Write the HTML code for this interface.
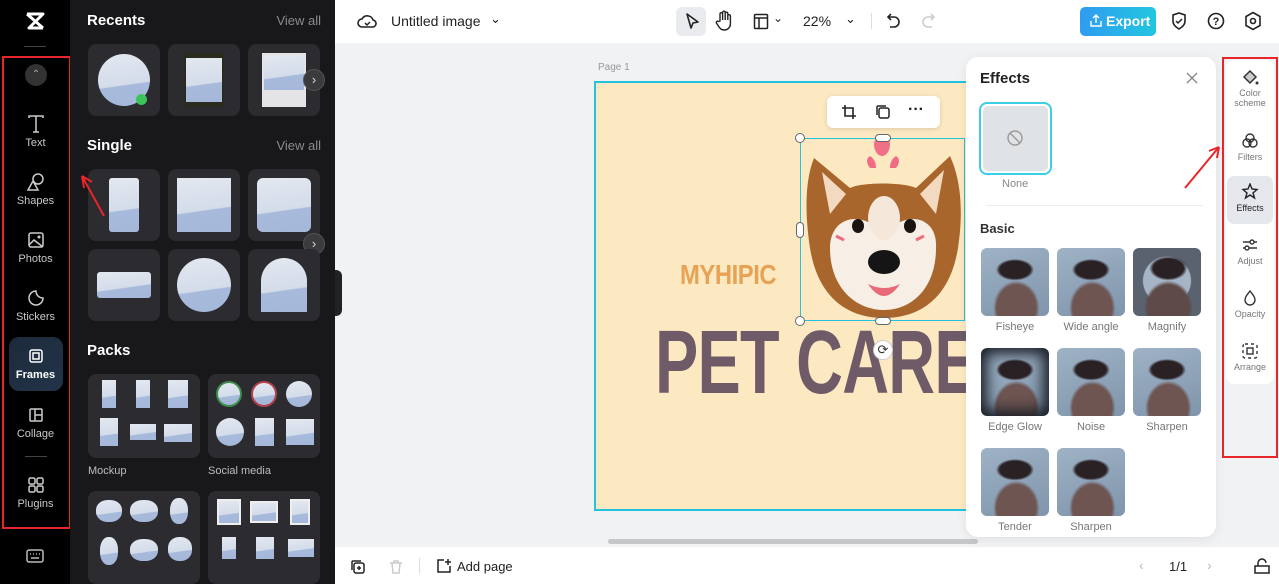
<!DOCTYPE html>
<html><head><meta charset="utf-8"><style>
*{box-sizing:border-box;margin:0;padding:0}
body{width:1279px;height:584px;overflow:hidden;font-family:"Liberation Sans",sans-serif;background:#f1f2f4;position:relative}
.abs{position:absolute}
#rail{left:0;top:0;width:70px;height:584px;background:#000}
#panel{left:70px;top:0;width:265px;height:584px;background:#18181b}
.ri{position:absolute;left:8px;width:55px;text-align:center;color:#c9c9cc;font-size:11px}
.ri svg{display:block;margin:0 auto 3px}
.h{position:absolute;color:#fff;font-weight:bold;font-size:15px}
.va{position:absolute;color:#8a8a8f;font-size:13px;right:14px}
.tile{position:absolute;width:72px;height:72px;background:#2b2b30;border-radius:8px;overflow:hidden}
.sky{position:absolute;background:linear-gradient(172deg,#e3e8f0 0%,#d4dcea 58%,#a7badb 60%,#a5b8da 100%)}
.pk{position:absolute;width:112px;height:84px;background:#2b2b30;border-radius:8px}
.pl{position:absolute;color:#bdbdc2;font-size:11px}
.nx{position:absolute;width:22px;height:22px;border-radius:50%;background:#3a3a3f;border:1px solid #555;color:#ddd;font-size:13px;text-align:center;line-height:19px}
#top{left:335px;top:0;width:944px;height:43px;background:#fff}
#bot{left:335px;top:547px;width:944px;height:37px;background:#fff}
#eff{left:966px;top:57px;width:250px;height:480px;background:#fff;border-radius:12px;box-shadow:0 2px 10px rgba(0,0,0,.08)}
.et{position:absolute;width:68px;height:68px;border-radius:6px;background:radial-gradient(ellipse 28% 16% at 50% 32%,#2a2124 80%,transparent 100%),radial-gradient(ellipse 34% 40% at 52% 88%,#6e5552 85%,transparent 100%),linear-gradient(160deg,#9fb2c6,#7f95ab)}
.el{position:absolute;width:68px;text-align:center;font-size:11px;color:#777}
#rr{left:1226px;top:60px;width:48px;height:324px;background:#fff;border-radius:8px}
.rt{position:absolute;left:2px;width:44px;text-align:center;font-size:9px;color:#777;line-height:10px}
.rt svg{display:block;margin:0 auto 2px}
.red{position:absolute;border:2px solid #e8262a}
</style></head><body>

<div id="rail" class="abs">
 <svg class="abs" style="left:24px;top:10px" width="22" height="22" viewBox="0 0 22 22"><path d="M3 4h16L5 18h14M3 4l16 14" stroke="#fff" stroke-width="3" fill="none" stroke-linejoin="round"/></svg>
 <div class="abs" style="left:24px;top:46px;width:22px;height:1px;background:#444"></div>
 <div class="abs" style="left:25px;top:64px;width:22px;height:22px;border-radius:50%;background:#333;color:#aaa;font-size:10px;text-align:center;line-height:22px">⌃</div>
 <div class="ri" style="top:114px"><svg width="20" height="20" viewBox="0 0 20 20"><path d="M3 4V2h14v2M10 2v16M7 18h6" stroke="#ccc" stroke-width="1.5" fill="none"/></svg>Text</div>
 <div class="ri" style="top:172px"><svg width="20" height="20" viewBox="0 0 20 20"><circle cx="12" cy="7" r="5" stroke="#ccc" stroke-width="1.5" fill="none"/><path d="M7 9l-5 9h10z" stroke="#ccc" stroke-width="1.5" fill="#000"/></svg>Shapes</div>
 <div class="ri" style="top:230px"><svg width="20" height="20" viewBox="0 0 20 20"><rect x="3" y="3" width="14" height="14" rx="2" stroke="#ccc" stroke-width="1.5" fill="none"/><path d="M3 15l5-5 9 7" stroke="#ccc" stroke-width="1.5" fill="none"/><circle cx="13" cy="7" r="1.5" fill="#ccc"/></svg>Photos</div>
 <div class="ri" style="top:288px"><svg width="20" height="20" viewBox="0 0 20 20"><path d="M10 3a7 7 0 1 0 7 7c-4 0-7-3-7-7z" stroke="#ccc" stroke-width="1.5" fill="none"/></svg>Stickers</div>
 <div class="abs" style="left:9px;top:337px;width:54px;height:54px;border-radius:10px;background:linear-gradient(135deg,#1c2a3a,#23344a)"></div>
 <div class="ri" style="top:346px;color:#fff;font-weight:bold"><svg width="20" height="20" viewBox="0 0 20 20"><rect x="4" y="4" width="12" height="12" rx="2" stroke="#fff" stroke-width="1.5" fill="none"/><rect x="7" y="7" width="6" height="6" stroke="#fff" stroke-width="1.5" fill="none"/></svg>Frames</div>
 <div class="ri" style="top:405px"><svg width="20" height="20" viewBox="0 0 20 20"><rect x="4" y="4" width="12" height="12" rx="1" stroke="#ccc" stroke-width="1.5" fill="none"/><path d="M9 4v12M9 10h7" stroke="#ccc" stroke-width="1.5"/></svg>Collage</div>
 <div class="abs" style="left:25px;top:456px;width:22px;height:1px;background:#444"></div>
 <div class="ri" style="top:475px"><svg width="20" height="20" viewBox="0 0 20 20"><rect x="3" y="3" width="6" height="6" rx="1.5" stroke="#ccc" stroke-width="1.5" fill="none"/><rect x="11" y="3" width="6" height="6" rx="1.5" stroke="#ccc" stroke-width="1.5" fill="none"/><rect x="3" y="11" width="6" height="6" rx="1.5" stroke="#ccc" stroke-width="1.5" fill="none"/><rect x="11" y="11" width="6" height="6" rx="1.5" stroke="#ccc" stroke-width="1.5" fill="none"/></svg>Plugins</div>
 <svg class="abs" style="left:26px;top:548px" width="18" height="16" viewBox="0 0 18 16"><rect x="1" y="2" width="16" height="12" rx="2" stroke="#bbb" stroke-width="1.5" fill="none"/><path d="M4 6h1M7 6h1M10 6h1M13 6h1M5 10h8" stroke="#bbb" stroke-width="1.5"/></svg>
</div>
<div class="red" style="left:2px;top:56px;width:69px;height:473px"></div>

<div id="panel" class="abs">
 <div class="h" style="left:17px;top:12px">Recents</div><div class="va" style="top:13px">View all</div>
 <div class="tile" style="left:18px;top:44px"><div class="sky" style="left:10px;top:10px;width:52px;height:52px;border-radius:50%"></div><div class="abs" style="left:48px;top:50px;width:11px;height:11px;border-radius:50%;background:#3ac45a"></div></div>
 <div class="tile" style="left:98px;top:44px"><div class="abs" style="left:16px;top:9px;width:40px;height:54px;background:#2a2a1f"></div><div class="sky" style="left:18px;top:14px;width:36px;height:44px"></div></div>
 <div class="tile" style="left:178px;top:44px"><div class="abs" style="left:14px;top:9px;width:44px;height:54px;background:#e4e4e6"></div><div class="sky" style="left:16px;top:12px;width:40px;height:34px"></div></div>
 <div class="nx" style="left:233px;top:69px">›</div>

 <div class="h" style="left:17px;top:137px">Single</div><div class="va" style="top:138px">View all</div>
 <div class="tile" style="left:18px;top:169px"><div class="sky" style="left:21px;top:9px;width:30px;height:54px;border-radius:3px"></div></div>
 <div class="tile" style="left:98px;top:169px"><div class="sky" style="left:9px;top:9px;width:54px;height:54px"></div></div>
 <div class="tile" style="left:178px;top:169px"><div class="sky" style="left:9px;top:9px;width:54px;height:54px;border-radius:6px"></div></div>
 <div class="nx" style="left:233px;top:233px">›</div>
 <div class="tile" style="left:18px;top:249px"><div class="sky" style="left:9px;top:23px;width:54px;height:26px;border-radius:3px"></div></div>
 <div class="tile" style="left:98px;top:249px"><div class="sky" style="left:9px;top:9px;width:54px;height:54px;border-radius:50%"></div></div>
 <div class="tile" style="left:178px;top:249px"><div class="sky" style="left:13px;top:9px;width:46px;height:54px;border-radius:23px 23px 0 0"></div></div>

 <div class="h" style="left:17px;top:342px">Packs</div>
 <div class="pk" style="left:18px;top:374px">
  <div class="sky" style="left:14px;top:6px;width:14px;height:28px"></div><div class="sky" style="left:48px;top:6px;width:14px;height:28px"></div><div class="sky" style="left:80px;top:6px;width:20px;height:28px"></div>
  <div class="sky" style="left:12px;top:44px;width:18px;height:28px"></div><div class="sky" style="left:42px;top:50px;width:26px;height:16px"></div><div class="sky" style="left:76px;top:50px;width:28px;height:18px"></div>
 </div>
 <div class="pk" style="left:138px;top:374px">
  <div class="sky" style="left:8px;top:7px;width:26px;height:26px;border-radius:50%;border:2px solid #3c8c4a"></div><div class="sky" style="left:43px;top:7px;width:26px;height:26px;border-radius:50%;border:2px solid #b3404f"></div><div class="sky" style="left:78px;top:7px;width:26px;height:26px;border-radius:50%"></div>
  <div class="sky" style="left:8px;top:44px;width:28px;height:28px;border-radius:50%"></div><div class="sky" style="left:47px;top:44px;width:19px;height:28px"></div><div class="sky" style="left:78px;top:45px;width:28px;height:26px"></div>
 </div>
 <div class="pl" style="left:18px;top:465px">Mockup</div><div class="pl" style="left:138px;top:465px">Social media</div>
 <div class="pk" style="left:18px;top:491px;height:93px">
  <div class="sky" style="left:8px;top:9px;width:26px;height:22px;border-radius:45%"></div><div class="sky" style="left:42px;top:9px;width:28px;height:22px;border-radius:45%"></div><div class="sky" style="left:82px;top:7px;width:18px;height:26px;border-radius:45%"></div>
  <div class="sky" style="left:12px;top:46px;width:18px;height:28px;border-radius:45%"></div><div class="sky" style="left:42px;top:48px;width:28px;height:22px;border-radius:45%"></div><div class="sky" style="left:80px;top:46px;width:24px;height:24px;border-radius:45%"></div>
 </div>
 <div class="pk" style="left:138px;top:491px;height:93px">
  <div class="sky" style="left:9px;top:8px;width:24px;height:26px;border:2px solid #eee"></div><div class="sky" style="left:42px;top:10px;width:28px;height:22px;border:2px solid #eee"></div><div class="sky" style="left:82px;top:8px;width:20px;height:26px;border:2px solid #eee"></div>
  <div class="sky" style="left:14px;top:46px;width:14px;height:22px"></div><div class="sky" style="left:48px;top:46px;width:18px;height:22px"></div><div class="sky" style="left:80px;top:48px;width:26px;height:18px"></div>
 </div>
</div>
<div class="abs" style="left:335px;top:270px;width:7px;height:46px;background:#222;border-radius:0 6px 6px 0"></div>
<svg class="abs" style="left:78px;top:170px" width="30" height="48"><path d="M26 46L4 6M4 6l2 12M4 6l10 6" stroke="#e8262a" stroke-width="2" fill="none"/></svg>

<div id="top" class="abs">
 <svg class="abs" style="left:22px;top:12px" width="20" height="18" viewBox="0 0 20 18"><path d="M5 15a4 4 0 0 1 0-8 6 6 0 0 1 11 1 3.5 3.5 0 0 1-1 7z" stroke="#222" stroke-width="1.6" fill="none"/><path d="M8 11l2 2 3-3" stroke="#222" stroke-width="1.5" fill="none"/></svg>
 <div class="abs" style="left:56px;top:13px;font-size:14px;color:#222">Untitled image</div>
 <div class="abs" style="left:155px;top:11px;font-size:13px;color:#222">⌄</div>
 <div class="abs" style="left:341px;top:7px;width:30px;height:29px;background:#e9ebef;border-radius:6px"></div>
 <svg class="abs" style="left:349px;top:12px" width="16" height="18"><path d="M3 2l11 8-5 1-2 5z" stroke="#222" stroke-width="1.6" fill="none" stroke-linejoin="round"/></svg>
 <svg class="abs" style="left:380px;top:10px" width="18" height="22" viewBox="0 0 18 22"><path d="M5 11V4a1.3 1.3 0 0 1 2.6 0v6V2.5a1.3 1.3 0 0 1 2.6 0V10V3.5a1.3 1.3 0 0 1 2.6 0V10V6a1.3 1.3 0 0 1 2.6 0v8a6 6 0 0 1-6 6c-3 0-4-1-6-4l-2-3a1.3 1.3 0 0 1 2-1.5z" stroke="#222" stroke-width="1.4" fill="none"/></svg>
 <svg class="abs" style="left:418px;top:13px" width="16" height="17"><rect x="1.5" y="1.5" width="13" height="14" rx="1" stroke="#222" stroke-width="1.5" fill="none"/><path d="M1.5 5h13M6 5v10" stroke="#222" stroke-width="1.5"/></svg>
 <div class="abs" style="left:438px;top:11px;font-size:12px;color:#222">⌄</div>
 <div class="abs" style="left:468px;top:13px;font-size:14px;color:#222">22%</div>
 <div class="abs" style="left:510px;top:11px;font-size:13px;color:#222">⌄</div>
 <div class="abs" style="left:536px;top:13px;width:1px;height:16px;background:#ddd"></div>
 <svg class="abs" style="left:551px;top:12px" width="16" height="18"><path d="M5 2L2 5l3 3M2 5h6a5 5 0 0 1 0 10H4" stroke="#222" stroke-width="1.6" fill="none"/></svg>
 <svg class="abs" style="left:585px;top:12px" width="16" height="18"><path d="M11 2l3 3-3 3M14 5H8a5 5 0 0 0 0 10h4" stroke="#ccc" stroke-width="1.6" fill="none"/></svg>
 <div class="abs" style="left:745px;top:7px;width:76px;height:29px;border-radius:5px;background:linear-gradient(90deg,#2f9cf0,#22c6e0);color:#fff;font-weight:bold;font-size:14px;line-height:29px;padding-left:26px">Export</div>
 <svg class="abs" style="left:755px;top:14px" width="12" height="14"><path d="M6 9V1M3 4l3-3 3 3M1 7v5h10V7" stroke="#fff" stroke-width="1.4" fill="none"/></svg>
 <svg class="abs" style="left:835px;top:11px" width="18" height="20"><path d="M9 2l6 2v6c0 4-3 6-6 8-3-2-6-4-6-8V4z" stroke="#222" stroke-width="1.6" fill="none"/><path d="M6 10l2 2 4-4" stroke="#222" stroke-width="1.5" fill="none"/></svg>
 <svg class="abs" style="left:872px;top:12px" width="18" height="18"><circle cx="9" cy="9" r="7.5" stroke="#222" stroke-width="1.6" fill="none"/><text x="9" y="13" text-anchor="middle" font-size="11" font-family="Liberation Sans" font-weight="bold" fill="#222">?</text></svg>
 <svg class="abs" style="left:909px;top:11px" width="18" height="20"><path d="M9 1.5l7 4v9l-7 4-7-4v-9z" stroke="#222" stroke-width="1.6" fill="none"/><circle cx="9" cy="10" r="2.5" stroke="#222" stroke-width="1.6" fill="none"/></svg>
</div>

<!-- canvas -->
<div class="abs" style="left:598px;top:62px;font-size:10px;color:#999">Page 1</div>
<div class="abs" style="left:594px;top:81px;width:380px;height:430px;background:#fde9c1;border:2px solid #22c3dc"></div>
<div class="abs" style="left:680px;top:259px;font-size:28px;font-weight:bold;color:#e8a255;transform:scaleX(.85);transform-origin:left;letter-spacing:-0.5px">MYHIPIC</div>
<div class="abs" style="left:655px;top:318px;font-size:90px;font-weight:bold;color:#6e5b67;transform:scaleX(.72);transform-origin:left;letter-spacing:-1px;white-space:nowrap;line-height:90px">PET CARE</div>
<!-- dog -->
<svg class="abs" style="left:800px;top:138px" width="166" height="184" viewBox="0 0 166 184">
 <path d="M10 110 C4 70 6 40 14 20 L50 50 C62 44 104 44 116 50 L150 18 C160 40 164 70 158 110 C150 160 120 180 84 180 C48 180 18 160 10 110Z" fill="#a8662c"/>
 <path d="M22 34 L46 56 L30 76Z M144 32 L120 56 L136 76Z" fill="#f3d9c0"/>
 <path d="M30 110 C30 80 60 70 84 96 C108 70 138 80 136 110 C136 150 112 172 84 172 C56 172 30 150 30 110Z" fill="#f7efe6"/>
 <ellipse cx="84" cy="80" rx="16" ry="22" fill="#f5e8da"/>
 <ellipse cx="58" cy="88" rx="6" ry="7" fill="#1a1410"/><ellipse cx="110" cy="88" rx="6" ry="7" fill="#1a1410"/>
 <ellipse cx="84" cy="124" rx="16" ry="12" fill="#151515"/>
 <path d="M68 146 Q84 170 100 146 Q84 154 68 146Z" fill="#e86a78"/>
 <path d="M36 98l8 4M124 98l-8 4" stroke="#ee6e80" stroke-width="3"/>
 <path d="M70 30 q-6 -8 0 -12 q6 4 6 12z M96 30 q6 -8 0 -12 q-6 4 -6 12z" fill="#f26b84"/>
</svg>
<div class="abs" style="left:874px;top:136px;width:16px;height:20px;background:#f07088;border-radius:50% 50% 50% 50%/40% 40% 60% 60%"></div>
<div class="abs" style="left:800px;top:138px;width:165px;height:183px;border:1.5px solid #22c3dc"></div>
<div class="abs" style="left:795px;top:133px;width:10px;height:10px;border-radius:50%;background:#fff;border:1px solid #666"></div>
<div class="abs" style="left:875px;top:134px;width:16px;height:8px;border-radius:4px;background:#fff;border:1px solid #666"></div>
<div class="abs" style="left:795px;top:316px;width:10px;height:10px;border-radius:50%;background:#fff;border:1px solid #666"></div>
<div class="abs" style="left:875px;top:317px;width:16px;height:8px;border-radius:4px;background:#fff;border:1px solid #666"></div>
<div class="abs" style="left:796px;top:222px;width:8px;height:16px;border-radius:4px;background:#fff;border:1px solid #666"></div>
<div class="abs" style="left:873px;top:340px;width:20px;height:20px;border-radius:50%;background:#fff;border:1px solid #ccc;text-align:center;font-size:13px;line-height:18px;color:#333">⟳</div>
<div class="abs" style="left:827px;top:96px;width:113px;height:32px;background:#fff;border-radius:6px;box-shadow:0 1px 5px rgba(0,0,0,.15)"></div>
<svg class="abs" style="left:841px;top:104px" width="16" height="16"><path d="M4 1v11h11M1 4h11v11" stroke="#222" stroke-width="1.6" fill="none"/></svg>
<svg class="abs" style="left:875px;top:104px" width="16" height="16"><rect x="4" y="4" width="10" height="10" rx="2" stroke="#222" stroke-width="1.5" fill="none"/><path d="M2 11V3a1 1 0 0 1 1-1h8" stroke="#222" stroke-width="1.5" fill="none"/></svg>
<div class="abs" style="left:908px;top:101px;font-size:16px;font-weight:bold;color:#222">···</div>
<div class="abs" style="left:608px;top:539px;width:370px;height:5px;border-radius:3px;background:#c5c7cb"></div>

<div id="eff" class="abs">
 <div class="abs" style="left:14px;top:13px;font-size:15px;font-weight:bold;color:#222">Effects</div>
 <svg class="abs" style="left:220px;top:15px" width="12" height="12"><path d="M1 1l10 10M11 1L1 11" stroke="#888" stroke-width="1.4"/></svg>
 <div class="abs" style="left:13px;top:45px;width:73px;height:73px;border:2px solid #3ccfe5;border-radius:8px;padding:2px"><div style="width:100%;height:100%;background:#dfe3e6;border-radius:5px"></div></div>
 <svg class="abs" style="left:40px;top:72px" width="18" height="18"><circle cx="9" cy="9" r="7" stroke="#999" stroke-width="1.4" fill="none"/><path d="M4 4l10 10" stroke="#999" stroke-width="1.4"/></svg>
 <div class="abs" style="left:36px;top:121px;font-size:11px;color:#888">None</div>
 <div class="abs" style="left:20px;top:148px;width:217px;height:1px;background:#ececec"></div>
 <div class="abs" style="left:14px;top:164px;font-size:13px;font-weight:bold;color:#333">Basic</div>
 <div class="et" style="left:15px;top:191px"></div><div class="et" style="left:91px;top:191px"></div><div class="et" style="left:167px;top:191px;background:radial-gradient(ellipse 28% 18% at 52% 30%,#2a2124 80%,transparent 100%),radial-gradient(ellipse 36% 40% at 52% 88%,#5e4a48 85%,transparent 100%),radial-gradient(circle at 50% 48%,#a6b5c6 48%,#5a6270 50%)"></div>
 <div class="el" style="left:15px;top:264px">Fisheye</div><div class="el" style="left:91px;top:264px">Wide angle</div><div class="el" style="left:167px;top:264px">Magnify</div>
 <div class="et" style="left:15px;top:291px;box-shadow:inset 0 0 14px 6px #1a1e26"></div><div class="et" style="left:91px;top:291px"></div><div class="et" style="left:167px;top:291px"></div>
 <div class="el" style="left:15px;top:364px">Edge Glow</div><div class="el" style="left:91px;top:364px">Noise</div><div class="el" style="left:167px;top:364px">Sharpen</div>
 <div class="et" style="left:15px;top:391px"></div><div class="et" style="left:91px;top:391px"></div>
 <div class="el" style="left:15px;top:464px">Tender</div><div class="el" style="left:91px;top:464px">Sharpen</div>
</div>

<div id="rr" class="abs">
 <div class="rt" style="top:8px"><svg width="18" height="18"><path d="M3 9l6-6 6 6-6 6z" stroke="#333" stroke-width="1.5" fill="#555" fill-opacity=".3"/><circle cx="16" cy="15" r="1.5" fill="#333"/></svg>Color<br>scheme</div>
 <div class="rt" style="top:72px"><svg width="18" height="18"><circle cx="9" cy="6" r="4" stroke="#333" stroke-width="1.4" fill="none"/><circle cx="6" cy="11" r="4" stroke="#333" stroke-width="1.4" fill="none"/><circle cx="12" cy="11" r="4" stroke="#333" stroke-width="1.4" fill="none"/></svg>Filters</div>
 <div class="abs" style="left:1px;top:116px;width:46px;height:48px;background:#e4e7eb;border-radius:7px"></div>
 <div class="rt" style="top:123px;color:#222"><svg width="18" height="18"><path d="M9 1l2 5 5 .5-4 3.5 1.5 5L9 12l-4.5 3 1.5-5-4-3.5 5-.5z" stroke="#222" stroke-width="1.4" fill="none"/></svg>Effects</div>
 <div class="rt" style="top:176px"><svg width="18" height="18"><path d="M2 6h14M2 12h14" stroke="#333" stroke-width="1.4"/><circle cx="11" cy="6" r="2" fill="#fff" stroke="#333" stroke-width="1.4"/><circle cx="6" cy="12" r="2" fill="#fff" stroke="#333" stroke-width="1.4"/></svg>Adjust</div>
 <div class="rt" style="top:229px"><svg width="18" height="18"><path d="M9 2c3 4 5 6 5 9a5 5 0 0 1-10 0c0-3 2-5 5-9z" stroke="#333" stroke-width="1.4" fill="none"/></svg>Opacity</div>
 <div class="rt" style="top:282px"><svg width="18" height="18"><rect x="2" y="2" width="14" height="14" rx="2" stroke="#333" stroke-width="1.4" stroke-dasharray="3 3" fill="none"/><rect x="6" y="6" width="6" height="6" stroke="#333" stroke-width="1.4" fill="none"/></svg>Arrange</div>
</div>
<div class="red" style="left:1222px;top:57px;width:56px;height:401px"></div>
<svg class="abs" style="left:1182px;top:144px" width="40" height="46"><path d="M3 44L37 3M37 3l-10 4M37 3l-2 11" stroke="#e8262a" stroke-width="2" fill="none"/></svg>

<div id="bot" class="abs">
 <svg class="abs" style="left:15px;top:12px" width="16" height="16"><rect x="4" y="4" width="10" height="10" rx="2" stroke="#222" stroke-width="1.5" fill="none"/><path d="M2 11V3a1 1 0 0 1 1-1h8M7 9h4M9 7v4" stroke="#222" stroke-width="1.5" fill="none"/></svg>
 <svg class="abs" style="left:53px;top:12px" width="16" height="16"><path d="M2 4h12M6 4V2h4v2M4 4l1 10h6l1-10" stroke="#ccc" stroke-width="1.5" fill="none"/></svg>
 <div class="abs" style="left:84px;top:11px;width:1px;height:16px;background:#ddd"></div>
 <svg class="abs" style="left:100px;top:11px" width="17" height="17"><path d="M9 2H3v12h12V8M13 1v6M10 4h6" stroke="#222" stroke-width="1.5" fill="none"/></svg>
 <div class="abs" style="left:122px;top:12px;font-size:13px;color:#222">Add page</div>
 <div class="abs" style="left:804px;top:10px;font-size:14px;color:#bbb">‹</div>
 <div class="abs" style="left:834px;top:12px;font-size:13px;color:#222">1/1</div>
 <div class="abs" style="left:872px;top:10px;font-size:14px;color:#bbb">›</div>
 <svg class="abs" style="left:918px;top:11px" width="18" height="16"><path d="M2 8h14v7H2zM5 8V5a4 4 0 0 1 8 0" stroke="#222" stroke-width="1.5" fill="none"/></svg>
</div>
</body></html>
